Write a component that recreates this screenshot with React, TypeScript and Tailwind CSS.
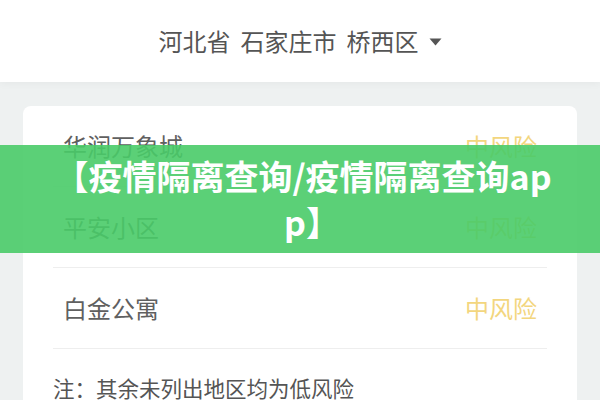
import React from "react";

const cjk = { fontFamily: '"Noto Sans CJK SC", "Noto Sans", sans-serif' };

const places = [
  { name: "华润万象城", level: "中风险" },
  { name: "平安小区", level: "中风险" },
  { name: "白金公寓", level: "中风险" },
];

export default function App() {
  return (
    <div
      className="relative w-[600px] h-[400px] overflow-hidden bg-[#eef1f1]"
      style={cjk}
    >
      {/* region picker */}
      <header className="h-[82px] bg-white flex items-center justify-center shadow-[0_2px_8px_rgba(0,0,0,0.04)]">
        <div className="flex items-center text-[24px] leading-none text-[#555555]">
          <span>河北省</span>
          <span className="ml-[10px]">石家庄市</span>
          <span className="ml-[10px]">桥西区</span>
          <svg width="13" height="8" viewBox="0 0 13 8" className="ml-[10px] mt-[2px]">
            <path d="M0.5 0.5 H12.5 L6.5 7.5 Z" fill="#555555" />
          </svg>
        </div>
      </header>

      {/* risk list */}
      <div className="mx-[23px] mt-[24px] rounded-[8px] bg-white pb-[30px]">
        <div className="px-[30px]">
          {places.map((p) => (
            <div
              key={p.name}
              className="h-[81px] flex items-center justify-between px-[10px] border-b border-[#eeeeee]"
            >
              <span className="text-[24px] text-[#606060]">{p.name}</span>
              <span className="text-[24px] text-[#f3d67e]">{p.level}</span>
            </div>
          ))}
          <div className="pt-[25px] text-[21.5px] leading-[28px] text-[#555555] whitespace-nowrap">
            注：其余未列出地区均为低风险
          </div>
        </div>
      </div>

      {/* title banner */}
      <div className="absolute left-0 right-0 top-[145px] h-[108px] bg-[rgba(73,203,104,0.9)] pt-[8px]">
        <p className="text-center text-white font-bold text-[34px] leading-[46px] whitespace-nowrap pl-[6px]">
          <span className="block">【疫情隔离查询/疫情隔离查询ap</span>
          <span className="block pl-[18px]">p】</span>
        </p>
      </div>
    </div>
  );
}
